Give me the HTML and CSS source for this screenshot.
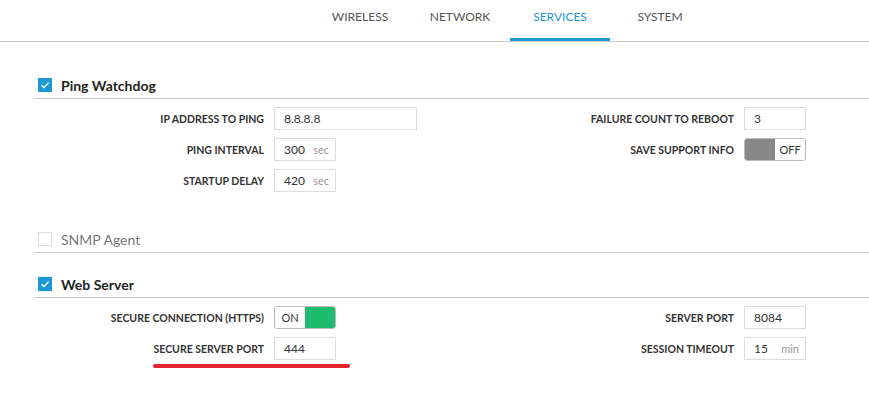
FILE: index.html
```html
<!DOCTYPE html>
<html lang="en">
<head>
    <meta charset="UTF-8"/>
    <title>Services</title>
    <link rel="stylesheet" href="styles.css">
</head>
<body>
    <nav class="tabs">
        <a class="tab">WIRELESS</a>
        <a class="tab">NETWORK</a>
        <a class="tab tab-active">SERVICES</a>
        <a class="tab">SYSTEM</a>
    </nav>
    <main class="page">
        <section class="block">
            <h2 class="block-head"><span class="check check-on"><svg viewBox="0 0 14 14"><path d="M3.5 7.2 L6 9.6 L10.6 4.6" fill="none" stroke="#fff" stroke-width="1.4"/></svg></span>Ping Watchdog</h2>
            <div class="block-body">
                <div class="col">
                    <div class="row"><label class="lbl">IP ADDRESS TO PING</label><div class="field field-wide">8.8.8.8</div></div>
                    <div class="row"><label class="lbl">PING INTERVAL</label><div class="field">300<span class="unit">sec</span></div></div>
                    <div class="row"><label class="lbl">STARTUP DELAY</label><div class="field">420<span class="unit">sec</span></div></div>
                </div>
                <div class="col">
                    <div class="row"><label class="lbl">FAILURE COUNT TO REBOOT</label><div class="field">3</div></div>
                    <div class="row"><label class="lbl">SAVE SUPPORT INFO</label><div class="switch"><span class="knob"></span><span class="switch-text">OFF</span></div></div>
                </div>
            </div>
        </section>
        <section class="block">
            <h2 class="block-head block-off"><span class="check"></span>SNMP Agent</h2>
        </section>
        <section class="block">
            <h2 class="block-head"><span class="check check-on"><svg viewBox="0 0 14 14"><path d="M3.5 7.2 L6 9.6 L10.6 4.6" fill="none" stroke="#fff" stroke-width="1.4"/></svg></span>Web Server</h2>
            <div class="block-body">
                <div class="col">
                    <div class="row"><label class="lbl">SECURE CONNECTION (HTTPS)</label><div class="switch"><span class="switch-text">ON</span><span class="knob knob-on"></span></div></div>
                    <div class="row"><label class="lbl">SECURE SERVER PORT</label><div class="field">444</div></div>
                    <div class="mark"></div>
                </div>
                <div class="col">
                    <div class="row"><label class="lbl">SERVER PORT</label><div class="field">8084</div></div>
                    <div class="row"><label class="lbl">SESSION TIMEOUT</label><div class="field">15<span class="unit">min</span></div></div>
                </div>
            </div>
        </section>
    </main>
</body>
</html>
```

FILE: styles.css
```css
body {
    margin: 0;
    font-family: Lato, 'Open Sans', sans-serif;
    color: #333;
    background-color: #fff;
}

.tabs {
    display: flex;
    height: 41px;
    padding-left: 310px;
    border-bottom: 1px solid #ccc;
}

.tab {
    box-sizing: border-box;
    width: 100px;
    padding-top: 9px;
    text-align: center;
    font-size: 12px;
    color: #555;
}

.tab-active {
    color: #1c97d4;
    border-bottom: 3px solid #1c97d4;
}

.page {
    padding: 30px 0 0 34px;
}

.block {
    margin-bottom: 18px;
}

.block-head {
    display: flex;
    align-items: center;
    height: 26px;
    margin: 0;
    padding-left: 4px;
    border-bottom: 1px solid #ccc;
    font-size: 14px;
    font-weight: 700;
    color: #222;
}

.block-off {
    font-weight: 400;
    color: #777;
}

.check {
    box-sizing: border-box;
    width: 14px;
    height: 14px;
    margin-right: 9px;
    border: 1px solid #ddd;
    background-color: #fff;
}

.check-on {
    border: 0;
    background-color: #1c98d6;
}

.check svg {
    display: block;
    width: 14px;
    height: 14px;
}

.block-body {
    display: flex;
    padding: 8px 0 16px;
}

.col {
    flex: none;
    display: flex;
    flex-direction: column;
    gap: 8px;
    width: 470px;
}

.col + .col {
    flex: 1;
    width: auto;
}

.row {
    display: flex;
    align-items: center;
    gap: 10px;
    height: 23px;
}

.lbl {
    flex: none;
    width: 230px;
    text-align: right;
    font-size: 10.5px;
    font-weight: 700;
    color: #333;
}

.field {
    box-sizing: border-box;
    display: flex;
    align-items: center;
    width: 62px;
    height: 23px;
    padding-left: 9px;
    border: 1px solid #ddd;
    font-size: 12px;
    color: #333;
}

.field-wide {
    width: 143px;
}

.unit {
    margin-left: auto;
    padding-right: 6px;
    font-size: 11px;
    color: #999;
}

.switch {
    box-sizing: border-box;
    display: flex;
    width: 62px;
    height: 23px;
    border: 1px solid #bbb;
    border-radius: 3px;
    overflow: hidden;
}

.knob {
    width: 30px;
    background-color: #888;
}

.knob-on {
    background-color: #1fbb6f;
}

.switch-text {
    flex: 1;
    display: flex;
    align-items: center;
    justify-content: center;
    font-size: 11px;
    color: #333;
}

.mark {
    width: 197px;
    height: 4px;
    margin: -4px 0 0 119px;
    border-radius: 2px;
    background-color: #e3232d;
}
```
